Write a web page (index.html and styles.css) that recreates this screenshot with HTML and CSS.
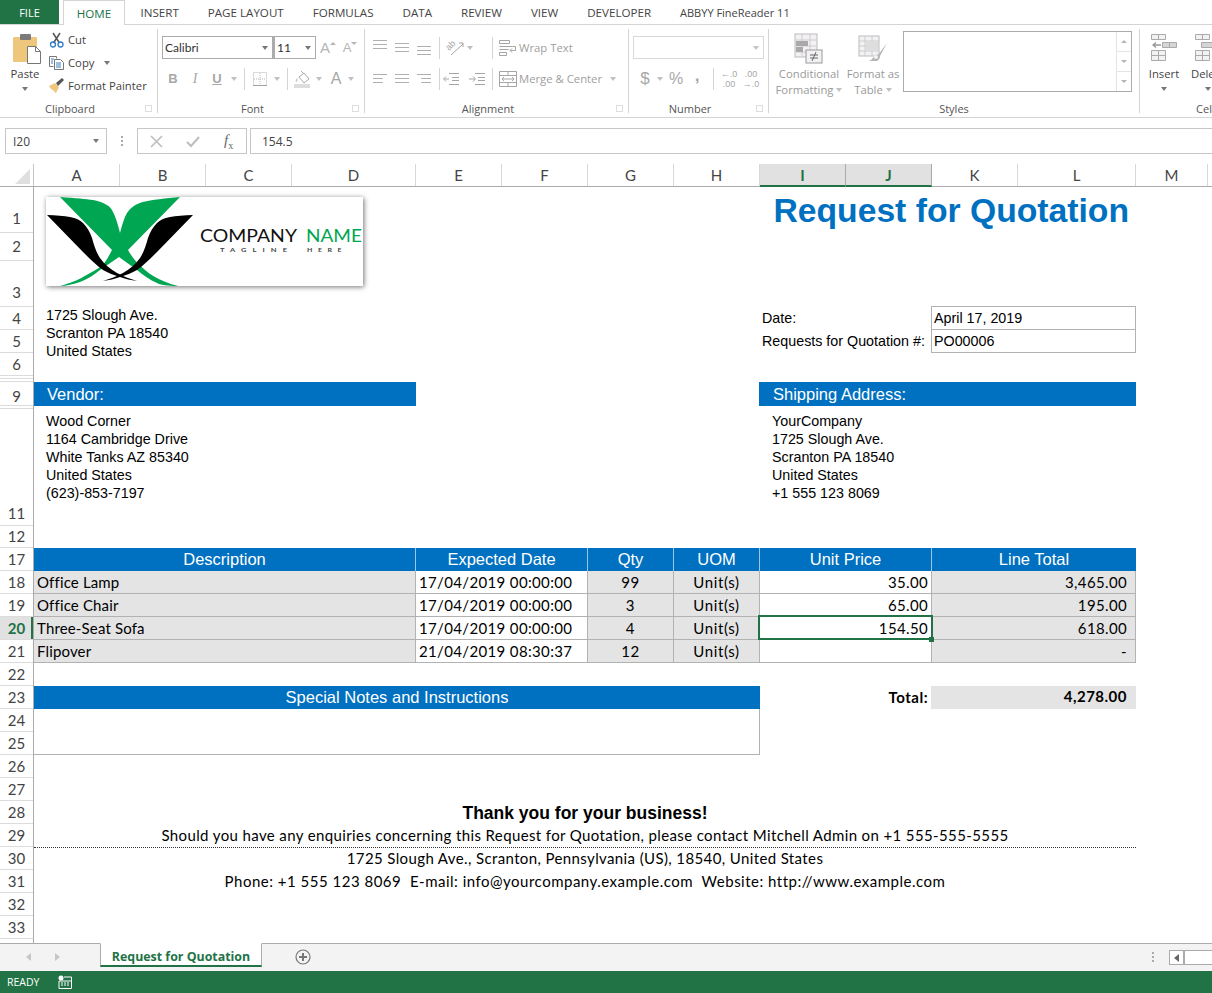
FILE: index.html
```html
<!DOCTYPE html>
<html>
<head>
    <title>Request for Quotation</title>
    <link rel="stylesheet" href="styles.css">
</head>
<body>
    <nav class="tabs">
        <span class="tab tab-file">FILE</span>
        <span class="tab tab-on">HOME</span>
        <span class="tab">INSERT</span>
        <span class="tab">PAGE LAYOUT</span>
        <span class="tab">FORMULAS</span>
        <span class="tab">DATA</span>
        <span class="tab">REVIEW</span>
        <span class="tab">VIEW</span>
        <span class="tab">DEVELOPER</span>
        <span class="tab tab-addin">ABBYY FineReader 11</span>
    </nav>

    <section class="ribbon">
        <div class="group group-clip">
            <div class="group-body clip-body">
                <div class="big paste">
                    <svg width="30" height="31" viewBox="0 0 30 31">
                        <rect x="1" y="4" width="24" height="25" rx="1" fill="#eec77c"/>
                        <rect x="8" y="1" width="11" height="6" rx="1" fill="#7b7b7b"/>
                        <path d="M15.500 13.500h8l5 5v12h-13z" fill="#fff" stroke="#777"/>
                        <path d="M23.500 13.500v5h5" fill="none" stroke="#777"/>
                    </svg>
                    <span class="big-text">Paste</span>
                    <i class="caret"></i>
                </div>
                <div class="clip-list">
                    <div class="clip-row">
                        <svg width="16" height="16" viewBox="0 0 16 16">
                            <path d="M4 1l6.500 10M11 1L4.500 11" stroke="#555" stroke-width="1.500" fill="none"/>
                            <circle cx="4" cy="12.500" r="2.500" fill="none" stroke="#2f7cc4" stroke-width="1.300"/>
                            <circle cx="11.500" cy="12.500" r="2.500" fill="none" stroke="#2f7cc4" stroke-width="1.300"/>
                        </svg>
                        <span>Cut</span>
                    </div>
                    <div class="clip-row">
                        <svg width="16" height="16" viewBox="0 0 16 16">
                            <path d="M.500 1.500h7v2M.500 1.500v10h4" fill="#fff" stroke="#777"/>
                            <path d="M5.500 4.500h6l3 3v7h-9z" fill="#fff" stroke="#777"/>
                            <path d="M2 4h3M2 6h2M2 8h2M7 8h5M7 10h5M7 12h5" stroke="#3a7fc1"/>
                        </svg>
                        <span>Copy</span>
                        <i class="caret caret-copy"></i>
                    </div>
                    <div class="clip-row">
                        <svg width="16" height="16" viewBox="0 0 16 16">
                            <path d="M0 8l6-3 4 4-3 6c-2-1-2-2-3-3-1 0-3-2-4-4z" fill="#eec77c"/>
                            <path d="M7 5l2 3 6-6-2-2z" fill="#555"/>
                        </svg>
                        <span>Format Painter</span>
                    </div>
                </div>
            </div>
            <div class="group-foot"><span class="group-name">Clipboard</span><i class="launcher"></i></div>
        </div>

        <div class="group group-font">
            <div class="group-body">
                <div class="tool-row">
                    <div class="select select-font">Calibri<i class="caret"></i></div>
                    <div class="select select-size">11<i class="caret"></i></div>
                    <span class="tool tool-a grow">A<i class="tick tick-up"></i></span>
                    <span class="tool tool-a shrink">A<i class="tick tick-down"></i></span>
                </div>
                <div class="tool-row">
                    <span class="tool fmt fmt-b">B</span>
                    <span class="tool fmt fmt-i">I</span>
                    <span class="tool fmt fmt-u">U</span>
                    <i class="caret slot"></i>
                    <i class="sep sep-font"></i>
                    <span class="tool">
                        <svg width="14" height="14" viewBox="0 0 14 14">
                            <path d="M.500 .500h13v13H.500z" fill="none" stroke="#b5b5b5" stroke-dasharray="1 1"/>
                            <path d="M7 1v12M1 7h12" stroke="#b5b5b5" stroke-dasharray="1 1"/>
                            <path d="M0 13.500h14" stroke="#a0a0a0"/>
                        </svg>
                    </span>
                    <i class="caret slot"></i>
                    <i class="sep sep-font"></i>
                    <span class="tool">
                        <svg width="18" height="18" viewBox="0 0 18 18">
                            <path d="M5 7l5-4 5 6-5 4z" fill="#fff" stroke="#aaa"/>
                            <path d="M7 1l3 3" stroke="#aaa"/>
                            <path d="M3 8c-1 1-2 3-1 4 2 0 2-3 1-4z" fill="#ccc"/>
                            <rect x="0" y="14" width="16" height="4" fill="#ddd"/>
                        </svg>
                    </span>
                    <i class="caret slot-sm"></i>
                    <span class="tool fmt fmt-color">A</span>
                    <i class="caret slot-xs"></i>
                </div>
            </div>
            <div class="group-foot"><span class="group-name">Font</span><i class="launcher"></i></div>
        </div>

        <div class="group group-align">
            <div class="group-body">
                <div class="tool-row">
                    <span class="tool"><i class="lines lines-top"></i></span>
                    <span class="tool"><i class="lines lines-mid"></i></span>
                    <span class="tool"><i class="lines lines-bot"></i></span>
                    <i class="sep sep-align"></i>
                    <span class="tool tool-orient">
                        <svg class="orient-icon" width="18" height="16" viewBox="0 0 18 16">
                            <text class="orient-text" transform="translate(3 11) rotate(-45)">ab</text>
                            <path d="M5 15L17 4M13 3h4v4" fill="none" stroke="#a5a5a5"/>
                        </svg>
                    </span>
                    <i class="caret slot-xs"></i>
                    <i class="sep sep-wrap"></i>
                    <svg class="wide-icon" width="18" height="16" viewBox="0 0 18 16">
                        <path d="M.500 .500h10v3H.500zM.500 6.500h13M.500 9.500h9M.500 12.500h7v3H.500z" fill="none" stroke="#a5a5a5"/>
                        <path d="M13.500 6.500h3v4h-5M13 8.500l-2 2 2 2" fill="none" stroke="#a5a5a5"/>
                    </svg>
                    <span class="wide-text">Wrap Text</span>
                </div>
                <div class="tool-row">
                    <span class="tool"><i class="lines lines-left"></i></span>
                    <span class="tool"><i class="lines lines-center"></i></span>
                    <span class="tool"><i class="lines lines-right"></i></span>
                    <i class="sep sep-align sep-indent"></i>
                    <span class="tool tool-indent">
                        <svg width="16" height="12" viewBox="0 0 16 12">
                            <path d="M6 .500h10M9 4.500h7M9 7.500h7M6 11.500h10M6 6H1M3 3.500L.500 6 3 8.500" fill="none" stroke="#a5a5a5"/>
                        </svg>
                    </span>
                    <span class="tool tool-indent-next">
                        <svg width="16" height="12" viewBox="0 0 16 12">
                            <path d="M6 .500h10M9 4.500h7M9 7.500h7M6 11.500h10M0 6h6M4 3.500L6.500 6 4 8.500" fill="none" stroke="#a5a5a5"/>
                        </svg>
                    </span>
                    <i class="sep sep-merge"></i>
                    <svg class="wide-icon" width="18" height="16" viewBox="0 0 18 16">
                        <path d="M.500 .500h17v15H.500zM.500 4.500h17M.500 11.500h17M9 .500v4M9 11.500v4" fill="none" stroke="#a5a5a5"/>
                        <path d="M3 8h12M5 6L3 8l2 2M13 6l2 2-2 2" fill="none" stroke="#a5a5a5"/>
                    </svg>
                    <span class="wide-text">Merge &amp; Center</span>
                    <i class="caret caret-merge"></i>
                </div>
            </div>
            <div class="group-foot"><span class="group-name">Alignment</span><i class="launcher"></i></div>
        </div>

        <div class="group group-number">
            <div class="group-body">
                <div class="tool-row">
                    <div class="select select-number"><i class="caret"></i></div>
                </div>
                <div class="tool-row">
                    <span class="tool sym sym-dollar">$</span>
                    <i class="caret slot-sm"></i>
                    <span class="tool sym sym-pct">%</span>
                    <span class="tool sym sym-comma">,</span>
                    <i class="sep sep-number"></i>
                    <span class="tool dec"><b>&#8592;.0</b><b>.00</b></span>
                    <span class="tool dec"><b>.00</b><b>&#8594;.0</b></span>
                </div>
            </div>
            <div class="group-foot"><span class="group-name">Number</span><i class="launcher"></i></div>
        </div>

        <div class="group group-styles">
            <div class="group-body styles-body">
                <div class="big big-cond">
                    <svg width="30" height="31" viewBox="0 0 30 31">
                        <rect x="1" y="1" width="22" height="23" fill="#f4f1f5" stroke="#bbb"/>
                        <path d="M1 7h22M1 13h22M1 19h22M8 1v23M16 1v23" stroke="#ccc"/>
                        <rect x="2" y="8" width="12" height="5" fill="#a9a9a9"/>
                        <rect x="2" y="14" width="7" height="5" fill="#a9a9a9"/>
                        <rect x="12" y="17" width="16" height="13" fill="#f4f1f5" stroke="#999"/>
                        <path d="M16 22h8M16 25h8M22 19l-4 9" stroke="#666" fill="none"/>
                    </svg>
                    <span class="big-text off">Conditional</span>
                    <span class="big-text off">Formatting<i class="caret caret-in"></i></span>
                </div>
                <div class="big big-table">
                    <svg width="30" height="31" viewBox="0 0 30 31">
                        <rect x="1" y="3" width="20" height="20" fill="#f4f1f5" stroke="#bbb"/>
                        <path d="M1 8h20M1 13h20M1 18h20M7 3v20M14 3v20" stroke="#ccc"/>
                        <rect x="8" y="9" width="12" height="9" fill="#ddd"/>
                        <path d="M29 10L20 22c-2-1-3 0-4 2-2 2-3 3-5 4h8c2-1 3-3 3-5z" fill="#b5b5b5"/>
                        <circle cx="18" cy="24" r="2" fill="#f4f1f5"/>
                    </svg>
                    <span class="big-text off">Format as</span>
                    <span class="big-text off">Table<i class="caret caret-in"></i></span>
                </div>
                <div class="gallery">
                    <div class="gallery-bar">
                        <span class="gallery-btn"><i class="tick tick-up"></i></span>
                        <span class="gallery-btn"><i class="tick tick-down"></i></span>
                        <span class="gallery-btn"><i class="tick tick-more"></i></span>
                    </div>
                </div>
            </div>
            <div class="group-foot"><span class="group-name">Styles</span></div>
        </div>

        <div class="group group-cells">
            <div class="group-body cells-body">
                <div class="big big-cell">
                    <svg width="28" height="31" viewBox="0 0 28 31">
                        <path d="M1.500 1.500h14v5h-14zM8.500 1.500v5M1.500 17.500h14v10h-14zM1.500 22.500h14M8.500 17.500v10" fill="#f4f1f5" stroke="#aaa"/>
                        <path d="M12.500 9.500h14v5h-14zM19.500 9.500v5" fill="#d5d5d5" stroke="#aaa"/>
                        <path d="M11 12H3M6 9.500L3 12l3 2.500" fill="none" stroke="#999" stroke-width="1.300"/>
                    </svg>
                    <span class="big-text">Insert</span>
                    <i class="caret"></i>
                </div>
                <div class="big big-del">
                    <svg width="28" height="31" viewBox="0 0 28 31">
                        <path d="M1.500 1.500h14v5h-14zM8.500 1.500v5M1.500 17.500h14v10h-14zM1.500 22.500h14M8.500 17.500v10" fill="#f4f1f5" stroke="#aaa"/>
                        <path d="M7.500 9.500h12v5h-12z" fill="#d5d5d5" stroke="#aaa"/>
                        <path d="M20 12h7M24 9.500l3 2.500-3 2.500" fill="none" stroke="#999" stroke-width="1.300"/>
                    </svg>
                    <span class="big-text">Delete</span>
                    <i class="caret"></i>
                </div>
            </div>
            <div class="group-foot"><span class="group-name">Cells</span></div>
        </div>
    </section>

    <section class="formula-bar">
        <div class="name-box">I20<i class="caret"></i></div>
        <i class="grip"></i>
        <div class="fx-box">
            <svg width="13" height="13" viewBox="0 0 13 13"><path d="M1 1l11 11M12 1L1 12" stroke="#bdbdbd" stroke-width="1.600"/></svg>
            <svg width="14" height="13" viewBox="0 0 14 13"><path d="M1 7l4 4 8-9" fill="none" stroke="#bdbdbd" stroke-width="2"/></svg>
            <span class="fx"><em>f</em><sub>x</sub></span>
        </div>
        <div class="formula-input">154.5</div>
    </section>

    <main class="sheet">
        <div class="col-heads">
            <span class="corner"><i class="corner-mark"></i></span>
            <span class="col">A</span>
            <span class="col">B</span>
            <span class="col">C</span>
            <span class="col col-d">D</span>
            <span class="col">E</span>
            <span class="col">F</span>
            <span class="col">G</span>
            <span class="col">H</span>
            <span class="col col-on">I</span>
            <span class="col col-on">J</span>
            <span class="col">K</span>
            <span class="col col-l">L</span>
            <span class="col col-m">M</span>
            <span class="col-rest"></span>
        </div>

        <div class="sheet-main">
            <div class="row-heads">
                <span class="rh rh-46">1</span>
                <span class="rh rh-28">2</span>
                <span class="rh rh-46">3</span>
                <span class="rh">4</span>
                <span class="rh">5</span>
                <span class="rh">6</span>
                <span class="rh rh-3"></span>
                <span class="rh rh-3"></span>
                <span class="rh rh-24">9</span>
                <span class="rh rh-3 rh-cut">10</span>
                <span class="rh rh-117">11</span>
                <span class="rh rh-22">12</span>
                <span class="rh">17</span>
                <span class="rh">18</span>
                <span class="rh">19</span>
                <span class="rh rh-on">20</span>
                <span class="rh">21</span>
                <span class="rh">22</span>
                <span class="rh">23</span>
                <span class="rh">24</span>
                <span class="rh">25</span>
                <span class="rh">26</span>
                <span class="rh">27</span>
                <span class="rh">28</span>
                <span class="rh">29</span>
                <span class="rh">30</span>
                <span class="rh">31</span>
                <span class="rh">32</span>
                <span class="rh">33</span>
            </div>

            <div class="page">
                <div class="top">
                    <div class="logo">
                        <svg width="317" height="89" viewBox="0 0 317 89">
                            <path d="M14 0C30 1 40 2 47 3C57 5 63 8 66 13C70 20 72 28 74 36C76 28 78 21 81 16C85 10 90 7 97 5C105 3 120 1 134 0L82 53C86 60 90 65 94 68C100 75 112 84 132 89C122 89 114 88 111 86C104 83 97 78 91 73L73 60L54 73C48 78 42 82 34 85C28 87 20 89 14 89C24 86 32 83 37 80C44 76 52 72 57 68C60 64 63 59 66 53z" fill="#00a651"/>
                            <path d="M1 18C10 18 18 19 24 20C30 21 34 23 37 26C41 30 44 35 46 41C48 48 50 55 54 61C58 67 64 72 71 76C77 79 84 82 91 84C85 83 79 82 74 80C68 78 62 76 57 73C50 68 44 62 37 55z" fill="#000"/>
                            <path d="M147 18C138 18 130 19 124 20C118 21 114 23 111 26C107 30 104 35 102 41C100 48 98 55 94 61C90 67 84 72 77 76C71 79 64 82 57 84C63 83 69 82 74 80C80 78 86 76 91 73C98 68 104 62 111 55z" fill="#000"/>
                            <text class="logo-name" x="154" y="44.500" textLength="97" lengthAdjust="spacingAndGlyphs">COMPANY</text>
                            <text class="logo-name logo-green" x="260" y="44.500" textLength="56" lengthAdjust="spacingAndGlyphs">NAME</text>
                            <text class="logo-tag" x="174" y="55" textLength="73" lengthAdjust="spacingAndGlyphs">TAGLINE</text>
                            <text class="logo-tag" x="261" y="55" textLength="40" lengthAdjust="spacingAndGlyphs">HERE</text>
                        </svg>
                    </div>
                    <h1 class="title">Request for Quotation</h1>
                </div>

                <div class="addr">
                    <div class="addr-left">
                        <div>1725 Slough Ave.</div>
                        <div>Scranton PA 18540</div>
                        <div>United States</div>
                    </div>
                    <div class="meta">
                        <span class="meta-label">Date:</span>
                        <span class="meta-val meta-first">April 17, 2019</span>
                        <span class="meta-label">Requests for Quotation #:</span>
                        <span class="meta-val">PO00006</span>
                    </div>
                </div>

                <div class="bands">
                    <div class="band band-vendor">Vendor:</div>
                    <div class="band band-ship">Shipping Address:</div>
                </div>

                <div class="contacts">
                    <div class="contact-left">
                        <div>Wood Corner</div>
                        <div>1164 Cambridge Drive</div>
                        <div>White Tanks AZ 85340</div>
                        <div>United States</div>
                        <div>(623)-853-7197</div>
                    </div>
                    <div>
                        <div>YourCompany</div>
                        <div>1725 Slough Ave.</div>
                        <div>Scranton PA 18540</div>
                        <div>United States</div>
                        <div>+1 555 123 8069</div>
                    </div>
                </div>

                <div class="items">
                    <div class="ih">Description</div>
                    <div class="ih">Expected Date</div>
                    <div class="ih">Qty</div>
                    <div class="ih">UOM</div>
                    <div class="ih">Unit Price</div>
                    <div class="ih ih-last">Line Total</div>

                    <div class="ic ic-grey ic-desc">Office Lamp</div>
                    <div class="ic ic-date">17/04/2019 00:00:00</div>
                    <div class="ic ic-grey ic-mid">99</div>
                    <div class="ic ic-grey ic-mid">Unit(s)</div>
                    <div class="ic ic-price">35.00</div>
                    <div class="ic ic-grey ic-total">3,465.00</div>

                    <div class="ic ic-grey ic-desc">Office Chair</div>
                    <div class="ic ic-date">17/04/2019 00:00:00</div>
                    <div class="ic ic-grey ic-mid">3</div>
                    <div class="ic ic-grey ic-mid">Unit(s)</div>
                    <div class="ic ic-price">65.00</div>
                    <div class="ic ic-grey ic-total">195.00</div>

                    <div class="ic ic-grey ic-desc">Three-Seat Sofa</div>
                    <div class="ic ic-date">17/04/2019 00:00:00</div>
                    <div class="ic ic-grey ic-mid">4</div>
                    <div class="ic ic-grey ic-mid">Unit(s)</div>
                    <div class="ic ic-price ic-selected">154.50</div>
                    <div class="ic ic-grey ic-total">618.00</div>

                    <div class="ic ic-grey ic-desc">Flipover</div>
                    <div class="ic ic-date">21/04/2019 08:30:37</div>
                    <div class="ic ic-grey ic-mid">12</div>
                    <div class="ic ic-grey ic-mid">Unit(s)</div>
                    <div class="ic ic-price"></div>
                    <div class="ic ic-grey ic-total">-</div>
                </div>

                <div class="notes-row">
                    <div class="notes">
                        <div class="notes-head">Special Notes and Instructions</div>
                        <div class="notes-body"></div>
                    </div>
                    <div class="total-label">Total:</div>
                    <div class="total-val">4,278.00</div>
                </div>

                <div class="foot">
                    <div class="thanks">Thank you for your business!</div>
                    <div class="foot-line foot-dotted">Should you have any enquiries concerning this Request for Quotation, please contact Mitchell Admin on +1 555-555-5555</div>
                    <div class="foot-line">1725 Slough Ave., Scranton, Pennsylvania (US), 18540, United States</div>
                    <div class="foot-line foot-contact">Phone: +1 555 123 8069&nbsp; E-mail: info@yourcompany.example.com&nbsp; Website: http://www.example.com</div>
                </div>
            </div>
        </div>
    </main>

    <section class="sheet-tabs">
        <div class="tab-nav"><i class="nav-left"></i><i class="nav-right"></i></div>
        <div class="sheet-tab">Request for Quotation</div>
        <svg class="add-sheet" width="16" height="16" viewBox="0 0 16 16">
            <circle cx="8" cy="8" r="7" fill="none" stroke="#777" stroke-width="1.200"/>
            <path d="M8 4v8M4 8h8" stroke="#777" stroke-width="2"/>
        </svg>
        <i class="grip grip-tabs"></i>
        <div class="hscroll"><span class="hscroll-btn"><i class="nav-left nav-dark"></i></span></div>
    </section>

    <footer class="status">
        <span>READY</span>
        <svg width="14" height="14" viewBox="0 0 14 14">
            <circle cx="3" cy="3" r="2.500" fill="#fff"/>
            <path d="M6 2h7.500v11.500H1V6h12" fill="none" stroke="#fff"/>
            <path d="M3 8h2M6 8h2M9 8h2M3 10h2M6 10h2M9 10h2" stroke="#fff"/>
        </svg>
    </footer>
</body>
</html>
```

FILE: styles.css
```css
html, body
{
    margin: 0;
    padding: 0;
}

body
{
    width: 1212px;
    height: 993px;
    overflow: hidden;
    background: white;
    color: #444;
    font-family: 'Open Sans', sans-serif;
    font-size: 11.300px;
}

i
{
    font-style: normal;
}

/* tabs */

.tabs
{
    display: flex;
    height: 24px;
    border-bottom: 1px solid #d4d4d4;
    white-space: nowrap;
}

.tab
{
    padding: 0 14.500px;
    line-height: 25px;
    font-size: 11.600px;
    color: #444;
}

.tab-addin
{
    font-size: 11px;
}

.tab-file
{
    width: 59px;
    box-sizing: border-box;
    padding: 0;
    margin-right: 4px;
    background: #217346;
    color: white;
    text-align: center;
    font-size: 11px;
}

.tab-on
{
    width: 62px;
    height: 25px;
    box-sizing: border-box;
    padding: 0;
    margin-right: 1px;
    text-align: center;
    color: #217346;
    background: white;
    border: 1px solid #d4d4d4;
    border-bottom: none;
}

/* ribbon */

.ribbon
{
    display: flex;
    height: 92px;
    overflow: hidden;
    border-bottom: 1px solid #d4d4d4;
}

.group
{
    flex: none;
    box-sizing: border-box;
    height: 84px;
    margin-top: 4px;
    border-right: 1px solid #d4d4d4;
    display: flex;
    flex-direction: column;
}

.group-clip { width: 158px; }
.group-font { width: 207px; padding-left: 4px; }
.group-align { width: 264px; padding-left: 4px; }
.group-number { width: 140px; padding-left: 4px; }
.group-styles { width: 371px; }
.group-cells { width: 136px; border-right: none; }

.group-body
{
    flex: none;
    height: 71px;
    padding-top: 7px;
    box-sizing: border-box;
    display: flex;
    flex-direction: column;
    gap: 8px;
}

.group-foot
{
    flex: none;
    display: flex;
    align-items: center;
    height: 16px;
}

.group-font .group-foot,
.group-align .group-foot,
.group-number .group-foot
{
    margin-left: -4px;
}

.group-name
{
    flex: 1;
    text-align: center;
    font-size: 11px;
    color: #555;
}

.launcher
{
    flex: none;
    width: 6px;
    height: 6px;
    margin: 0 5px;
    border-right: 1px solid #999;
    border-bottom: 1px solid #999;
    outline: 1px solid #ddd;
    outline-offset: -1px;
}

.caret
{
    display: inline-block;
    width: 0;
    height: 0;
    border-left: 3.500px solid transparent;
    border-right: 3.500px solid transparent;
    border-top: 4px solid #777;
}

.tool-row
{
    display: flex;
    align-items: center;
    height: 23px;
}

.tool
{
    flex: none;
    width: 22px;
    height: 22px;
    display: flex;
    align-items: center;
    justify-content: center;
    position: relative;
    color: #a8a8a8;
}

.sep
{
    flex: none;
    display: block;
    width: 1px;
    height: 22px;
    background: #d4d4d4;
}

.slot,
.slot-sm,
.slot-xs
{
    flex: none;
    border-top-color: #c0c0c0;
    border-left-width: 3px;
    border-right-width: 3px;
}

.slot { margin: 0 3px; }
.slot-sm { margin: 0 2px; }
.slot-xs { margin: 0 1px; }

/* clipboard */

.clip-body
{
    flex-direction: row;
    padding-top: 0;
    gap: 2px;
}

.big
{
    display: flex;
    flex-direction: column;
    align-items: center;
    flex: none;
    padding-top: 4px;
    line-height: 16px;
}

.big svg
{
    flex: none;
    margin-bottom: 2px;
}

.big-text
{
    white-space: nowrap;
    color: #444;
}

.big-text.off
{
    color: #999;
}

.big .caret
{
    margin-top: 5px;
}

.paste
{
    width: 44px;
    margin-left: 3px;
}

.paste svg
{
    margin-left: 3px;
}

.clip-list
{
    display: flex;
    flex-direction: column;
    margin-top: -1px;
}

.clip-row
{
    display: flex;
    align-items: center;
    gap: 3px;
    height: 23px;
    white-space: nowrap;
}

.clip-row svg
{
    flex: none;
}

.caret-copy
{
    margin-left: 7px;
}

/* font */

.select
{
    box-sizing: border-box;
    height: 23px;
    border: 1px solid #ababab;
    display: flex;
    align-items: center;
    justify-content: space-between;
    padding: 0 4px 0 2px;
    font-family: 'Lato', sans-serif;
    font-size: 12px;
    color: #333;
}

.select-font { width: 111px; }
.select-size { width: 43px; border-left: 2px solid #ababab; }

.tool-a
{
    font-family: 'Liberation Sans', sans-serif;
    color: #b5b5b5;
}

.grow { font-size: 15px; margin-left: 1px; }
.shrink { font-size: 13px; }

.tick
{
    display: inline-block;
    width: 0;
    height: 0;
    border-left: 3px solid transparent;
    border-right: 3px solid transparent;
}

.tick-up { border-bottom: 3px solid #b5b5b5; }
.tick-down { border-top: 3px solid #b5b5b5; }

.tool-a .tick
{
    margin-bottom: 9px;
}

.fmt
{
    font-family: 'Liberation Sans', sans-serif;
    font-size: 13px;
}

.fmt-b { font-weight: bold; }
.fmt-i { font-style: italic; font-family: 'Liberation Serif', serif; font-size: 14px; }
.fmt-u { text-decoration: underline; font-weight: bold; }
.fmt-color { font-size: 16px; margin-left: 1px; }
.sep-font { margin: 0 4px 0 4px; }

/* alignment */

.lines
{
    display: block;
    width: 14px;
    height: 9px;
    background: repeating-linear-gradient(#b0b0b0 0 1px, transparent 1px 4px);
}

.lines-top { margin-bottom: 6px; }
.lines-bot { margin-top: 6px; }
.lines-left { clip-path: polygon(0 0, 100% 0, 100% 1px, 70% 1px, 70% 100%, 0 100%); }
.lines-right { clip-path: polygon(0 0, 100% 0, 100% 100%, 30% 100%, 30% 1px, 0 1px); }

.orient-icon
{
    overflow: visible;
}

.orient-text
{
    font-family: 'Liberation Sans', sans-serif;
    font-size: 9px;
    fill: #a5a5a5;
}

.sep-align { margin: 0 4px; }
.sep-indent { margin-right: 0; }
.tool-orient { width: 22px; }
.tool-indent-next { margin-left: 4px; }
.sep-wrap { margin-left: 18px; margin-right: 6px; }
.sep-merge { margin-left: 4px; margin-right: 6px; }

.wide-icon
{
    flex: none;
    margin-right: 2px;
}

.wide-text
{
    color: #a0a0a0;
    white-space: nowrap;
}

.caret-merge
{
    margin-left: 8px;
    border-top-color: #c0c0c0;
}

/* number */

.select-number
{
    width: 131px;
    justify-content: flex-end;
    border-color: #d8d8d8;
}

.select-number .caret
{
    border-top-color: #c4c4c4;
}

.sym
{
    font-family: 'Liberation Sans', sans-serif;
    color: #a8a8a8;
}

.sym-dollar { font-size: 17px; width: 20px; margin-left: 2px; }
.sym-pct { font-size: 16px; }
.sym-comma { font-size: 17px; font-weight: bold; width: 20px; padding-bottom: 5px; box-sizing: border-box; }
.sep-number { margin: 0 4px 0 6px; }

.dec
{
    flex-direction: column;
    font-family: 'Liberation Sans', sans-serif;
    font-size: 9px;
    line-height: 10px;
}

.dec b
{
    display: block;
    font-weight: normal;
}

/* styles */

.styles-body
{
    flex-direction: row;
    padding-top: 0;
    padding-left: 5px;
    gap: 0;
}

.big-cond { width: 70px; }
.big-table { width: 58px; }

.caret-in
{
    margin: 0 0 2px 3px !important;
    border-top-color: #c0c0c0;
}

.gallery
{
    flex: none;
    box-sizing: border-box;
    width: 229px;
    height: 61px;
    margin: 2px 0 0 1px;
    border: 1px solid #ababab;
    display: flex;
    justify-content: flex-end;
}

.gallery-bar
{
    width: 14px;
    border-left: 1px solid #e4e4e4;
    display: flex;
    flex-direction: column;
}

.gallery-btn
{
    flex: 1;
    display: flex;
    align-items: center;
    justify-content: center;
    border-bottom: 1px solid #e4e4e4;
}

.gallery-btn:last-child
{
    border-bottom: none;
}

.tick-more
{
    border-top: 3px solid #b5b5b5;
    box-shadow: 0 -4px 0 -3px #b5b5b5;
}

/* cells */

.cells-body
{
    flex-direction: row;
    padding-top: 0;
    gap: 0;
}

.big-cell { width: 48px; }
.big-del { width: 40px; }

/* formula bar */

.formula-bar
{
    display: flex;
    align-items: center;
    height: 26px;
    margin-top: 10px;
    padding-left: 5px;
}

.name-box
{
    box-sizing: border-box;
    width: 102px;
    height: 26px;
    border: 1px solid #c6c6c6;
    display: flex;
    align-items: center;
    justify-content: space-between;
    padding: 0 7px;
    font-size: 12px;
    color: #444;
}

.grip
{
    flex: none;
    width: 2px;
    height: 2px;
    margin: 0 14px;
    background: #aaa;
    box-shadow: 0 -4px 0 #aaa, 0 4px 0 #aaa;
}

.fx-box
{
    box-sizing: border-box;
    width: 110px;
    height: 26px;
    border: 1px solid #c6c6c6;
    display: flex;
    align-items: center;
    padding-left: 12px;
    gap: 23px;
}

.fx
{
    font-family: 'Liberation Serif', serif;
    font-size: 15px;
    color: #666;
    margin-left: 1px;
}

.fx sub
{
    font-size: 10px;
}

.formula-input
{
    flex: 1;
    box-sizing: border-box;
    height: 26px;
    margin-left: 3px;
    border: 1px solid #c6c6c6;
    border-right: none;
    padding-left: 11px;
    line-height: 25px;
    font-size: 12px;
    color: #444;
}

/* sheet */

.sheet
{
    height: 779px;
    margin-top: 10px;
    overflow: hidden;
    font-family: 'Lato', sans-serif;
    color: black;
}

.col-heads
{
    display: flex;
    height: 22px;
    border-bottom: 1px solid #ababab;
    font-size: 15px;
    color: #444;
}

.corner
{
    flex: none;
    box-sizing: border-box;
    width: 34px;
    border-right: 1px solid #c6c6c6;
    position: relative;
}

.corner-mark
{
    position: absolute;
    right: 3px;
    bottom: 2px;
    width: 0;
    height: 0;
    border-left: 15px solid transparent;
    border-bottom: 15px solid #dfdfdf;
}

.col
{
    flex: none;
    box-sizing: border-box;
    width: 86px;
    border-right: 1px solid #d8d8d8;
    line-height: 23px;
    text-align: center;
}

.col-d { width: 124px; }
.col-l { width: 118px; }
.col-m { width: 72px; }

.col-rest
{
    flex: 1;
}

.col-on
{
    background: #e1e1e1;
    color: #217346;
    font-weight: bold;
    border-right-color: #ababab;
    border-bottom: 2px solid #217346;
    height: 23px;
}

.sheet-main
{
    display: flex;
    height: 756px;
}

.row-heads
{
    flex: none;
    box-sizing: border-box;
    width: 34px;
    border-right: 1px solid #ababab;
    display: flex;
    flex-direction: column;
    font-size: 15px;
    color: #444;
}

.rh
{
    flex: none;
    box-sizing: border-box;
    height: 23px;
    display: flex;
    align-items: flex-end;
    justify-content: center;
    overflow: hidden;
    line-height: 22px;
    border-bottom: 1px solid #dcdcdc;
}

.rh-46 { height: 46px; padding-bottom: 3px; }
.rh-28 { height: 28px; padding-bottom: 3px; }
.rh-117 { height: 117px; padding-bottom: 1px; }
.rh-22 { height: 22px; }
.rh-24 { height: 24px; line-height: 18px; }
.rh-3 { height: 3px; }

.rh-cut
{
    align-items: flex-start;
}

.rh-on
{
    background: #e1e1e1;
    color: #217346;
    font-weight: bold;
    box-shadow: inset -2px 0 0 #217346;
}

.page
{
    width: 1178px;
    font-family: 'Liberation Sans', sans-serif;
    font-size: 14.300px;
    line-height: 18px;
}

.top
{
    display: flex;
    justify-content: space-between;
    height: 120px;
    padding: 10px 83px 0 12px;
    box-sizing: border-box;
}

.logo
{
    width: 317px;
    height: 89px;
    background: white;
    box-shadow: 1px 1px 5px rgba(0, 0, 0, 0.55);
}

.logo svg
{
    display: block;
}

.logo-name
{
    font-family: 'Lato', sans-serif;
    font-size: 18px;
    fill: #111;
}

.logo-green
{
    fill: #00a651;
}

.logo-tag
{
    font-family: 'Lato', sans-serif;
    font-size: 5px;
    letter-spacing: 4px;
    font-weight: bold;
    fill: #444;
}

.title
{
    margin: -10px 0 0;
    font-size: 33.700px;
    line-height: 46px;
    color: #0070c0;
}

.addr
{
    display: flex;
    height: 75px;
}

.addr-left
{
    box-sizing: border-box;
    width: 728px;
    padding-left: 12px;
    margin-top: -1px;
}

.meta
{
    display: grid;
    grid-template-columns: 169px 205px;
    grid-auto-rows: 23px;
    align-content: start;
    line-height: 23px;
}

.meta-val
{
    box-sizing: border-box;
    border: 1px solid #b2b2b2;
    border-top: none;
    padding-left: 2px;
    height: 23px;
    line-height: 22px;
}

.meta-first
{
    height: 24px;
    border-top: 1px solid #b2b2b2;
    margin-top: -1px;
}

.bands
{
    display: flex;
    height: 24px;
}

.band
{
    box-sizing: border-box;
    background: #0070c0;
    color: white;
    font-size: 16.500px;
    line-height: 25px;
    padding-left: 13px;
}

.band-vendor { width: 382px; }
.band-ship { width: 377px; margin-left: 343px; padding-left: 14px; }

.contacts
{
    display: flex;
    height: 142px;
    padding-top: 6px;
    box-sizing: border-box;
}

.contact-left
{
    box-sizing: border-box;
    width: 738px;
    padding-left: 12px;
}

.items
{
    display: grid;
    grid-template-columns: 382px 172px 86px 86px 172px 204px;
    grid-auto-rows: 23px;
    width: 1102px;
}

.ih
{
    box-sizing: border-box;
    background: #0070c0;
    color: white;
    font-size: 16.500px;
    line-height: 23px;
    text-align: center;
    border-right: 1px solid #9cc6e8;
}

.ih-last
{
    border-right: none;
}

.ic
{
    box-sizing: border-box;
    border-right: 1px solid #b2b2b2;
    border-bottom: 1px solid #b2b2b2;
    font-family: 'Lato', sans-serif;
    font-size: 15px;
    letter-spacing: 0.350px;
    line-height: 23px;
    white-space: nowrap;
}

.ic-grey
{
    background: #e4e4e4;
}

.ic-desc
{
    padding-left: 3px;
    letter-spacing: 0.150px;
}

.ic-date
{
    padding-left: 3px;
}

.ic-mid
{
    text-align: center;
    letter-spacing: 0.600px;
}

.ic-price
{
    text-align: right;
    padding-right: 3px;
    line-height: 22px;
}

.ic-total
{
    text-align: right;
    padding-right: 8px;
    line-height: 22px;
}

.ic-selected
{
    position: relative;
    z-index: 1;
}

.ic-selected::before
{
    content: "";
    position: absolute;
    top: -2px;
    left: -2px;
    right: -2px;
    bottom: -1px;
    border: 2px solid #217346;
}

.ic-selected::after
{
    content: "";
    position: absolute;
    right: -3px;
    bottom: -3px;
    width: 5px;
    height: 5px;
    background: #217346;
}

.notes-row
{
    display: flex;
    margin-top: 23px;
    height: 69px;
}

.notes
{
    flex: none;
    width: 726px;
}

.notes-head
{
    height: 23px;
    background: #0070c0;
    color: white;
    font-size: 16.500px;
    line-height: 23px;
    text-align: center;
}

.notes-body
{
    box-sizing: border-box;
    height: 46px;
    border-right: 1px solid #b2b2b2;
    border-bottom: 1px solid #b2b2b2;
}

.total-label
{
    flex: none;
    box-sizing: border-box;
    width: 171px;
    height: 23px;
    padding-right: 3px;
    text-align: right;
    font-family: 'Lato', sans-serif;
    font-size: 15px;
    font-weight: bold;
    letter-spacing: 0.500px;
    line-height: 22px;
}

.total-val
{
    flex: none;
    box-sizing: border-box;
    width: 205px;
    height: 23px;
    padding-right: 9px;
    background: #e4e4e4;
    text-align: right;
    font-family: 'Lato', sans-serif;
    font-size: 15px;
    font-weight: bold;
    letter-spacing: 0.500px;
    line-height: 21px;
}

.foot
{
    width: 1102px;
    margin-top: 47px;
    text-align: center;
}

.thanks
{
    height: 23px;
    font-size: 17.500px;
    font-weight: bold;
    line-height: 23px;
}

.foot-line
{
    box-sizing: border-box;
    height: 23px;
    font-family: 'Lato', sans-serif;
    font-size: 15px;
    letter-spacing: 0.380px;
    line-height: 21px;
    white-space: nowrap;
}

.foot-dotted
{
    border-bottom: 1px dotted #333;
}

.foot-contact
{
    letter-spacing: 0.500px;
}

/* sheet tabs and status */

.sheet-tabs
{
    display: flex;
    align-items: flex-start;
    box-sizing: border-box;
    height: 28px;
    background: #f3f3f3;
    border-top: 1px solid #ababab;
}

.tab-nav
{
    flex: none;
    width: 100px;
    display: flex;
    gap: 24px;
    padding: 9px 0 0 26px;
    box-sizing: border-box;
}

.nav-left,
.nav-right
{
    display: block;
    width: 0;
    height: 0;
    border-top: 4px solid transparent;
    border-bottom: 4px solid transparent;
}

.nav-left { border-right: 5px solid #c6c6c6; }
.nav-right { border-left: 5px solid #c6c6c6; }
.nav-dark { border-right-color: #666; }

.sheet-tab
{
    flex: none;
    box-sizing: border-box;
    width: 162px;
    height: 24px;
    margin-top: -1px;
    background: white;
    border: 1px solid #ababab;
    border-top-color: white;
    border-bottom: 2px solid #217346;
    text-align: center;
    font-size: 12.400px;
    font-weight: bold;
    line-height: 25px;
    color: #217346;
}

.add-sheet
{
    flex: none;
    margin: 5px 0 0 33px;
}

.grip-tabs
{
    margin: 12px 15px 0 841px;
}

.hscroll
{
    box-sizing: border-box;
    flex: none;
    width: 60px;
    height: 15px;
    margin-top: 6px;
    background: white;
    border: 1px solid #ababab;
    border-right: none;
}

.hscroll-btn
{
    display: flex;
    align-items: center;
    justify-content: center;
    box-sizing: border-box;
    width: 15px;
    height: 13px;
    border-right: 2px solid #ababab;
}

.status
{
    display: flex;
    align-items: center;
    gap: 19px;
    height: 22px;
    padding-left: 7px;
    background: #217346;
    color: white;
    font-size: 10.500px;
}
```
